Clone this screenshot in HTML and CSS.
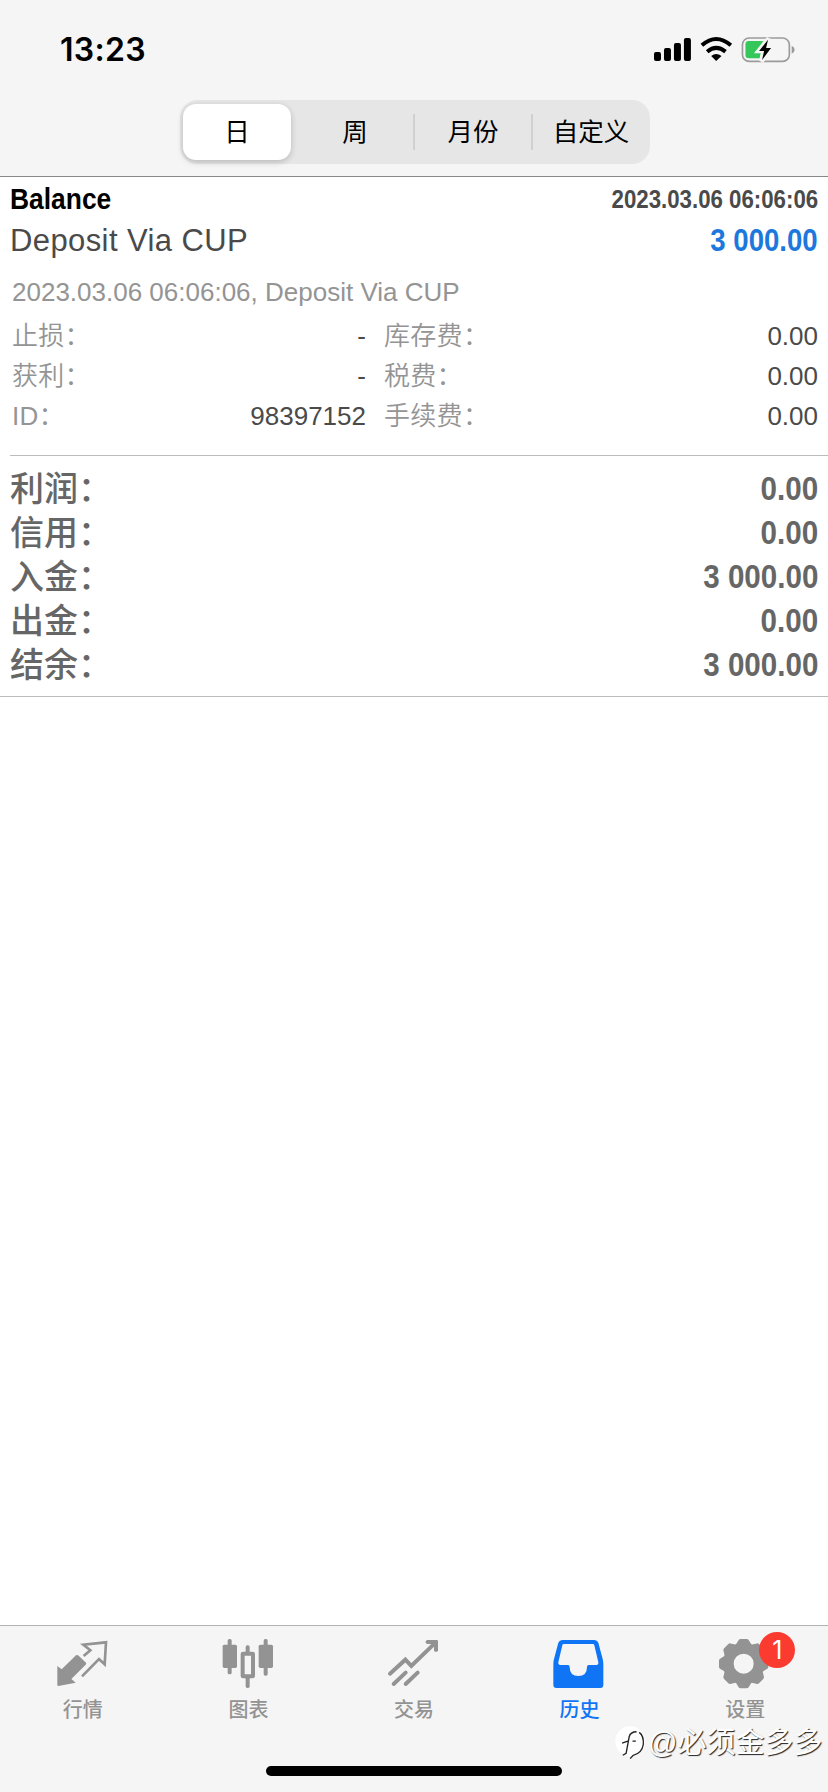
FILE: index.html
```
<!DOCTYPE html>
<html lang="zh-CN">
<head>
    <meta charset="UTF-8">
    <meta name="viewport" content="width=device-width, initial-scale=1.0">
    <title>历史</title>
    <link rel="stylesheet" href="styles.css">
</head>
<body>
    <div class="app">
        <header class="header">
            <div class="status-bar">
                <span class="time">13:23</span>
                <svg class="status-icons" viewBox="714 105 430 90">
                    <!-- signal -->
                    <rect x="717" y="156" width="21" height="27" rx="6"/>
                    <rect x="747" y="144" width="21" height="39" rx="6"/>
                    <rect x="777" y="129" width="21" height="54" rx="6"/>
                    <rect x="807" y="114" width="21" height="69" rx="6"/>
                    <!-- wifi -->
                    <g fill="none" stroke="#000" stroke-width="12">
                        <path d="M861 136 Q904 98 948 136"/>
                        <path d="M877 155 Q904 132 932 155"/>
                    </g>
                    <path d="M889 168 Q904 156 920 168 L904 183 Z"/>
                    <!-- battery -->
                    <rect x="983" y="114" width="141" height="70" rx="20" fill="none" stroke="#9b9b9b" stroke-width="5"/>
                    <path d="M1131 137 Q1140 141 1140 149 Q1140 157 1131 161 Z" fill="#9b9b9b"/>
                    <rect x="992" y="123" width="58" height="52" rx="10" fill="#35c759"/>
                    <path d="M1062 115 L1032 153 H1046 L1040 184 L1070 144 H1055 Z" stroke="#f5f5f5" stroke-width="14"/>
                    <path d="M1060 119 L1033 153 H1048 L1042 180 L1069 144 H1054 Z"/>
                </svg>
            </div>
            <div class="segments">
                <button class="segment active">日</button>
                <button class="segment">周</button>
                <button class="segment divided">月份</button>
                <button class="segment divided">自定义</button>
            </div>
        </header>

        <main class="content">
            <section class="deal">
                <div class="deal-row">
                    <span class="deal-title">Balance</span>
                    <span class="deal-date">2023.03.06 06:06:06</span>
                </div>
                <div class="deal-row amount-row">
                    <span class="deal-name">Deposit Via CUP</span>
                    <span class="deal-amount">3 000.00</span>
                </div>
                <p class="deal-comment">2023.03.06 06:06:06, Deposit Via CUP</p>
                <div class="details">
                    <div class="detail"><span>止损：</span><b>-</b></div>
                    <div class="detail"><span>库存费：</span><b>0.00</b></div>
                    <div class="detail"><span>获利：</span><b>-</b></div>
                    <div class="detail"><span>税费：</span><b>0.00</b></div>
                    <div class="detail"><span>ID：</span><b>98397152</b></div>
                    <div class="detail"><span>手续费：</span><b>0.00</b></div>
                </div>
            </section>
            <section class="totals">
                <div class="total"><span>利润：</span><b>0.00</b></div>
                <div class="total"><span>信用：</span><b>0.00</b></div>
                <div class="total"><span>入金：</span><b>3 000.00</b></div>
                <div class="total"><span>出金：</span><b>0.00</b></div>
                <div class="total"><span>结余：</span><b>3 000.00</b></div>
            </section>
        </main>

        <nav class="tab-bar">
            <a class="tab">
                <svg viewBox="158 78 180 159">
                    <path d="M171 168 L184 178 L227 136 Q231 133 235 137 L257 158 Q259 161 256 164 L213 207 L226 218 L174 228 Q171 228 171 225 Z"/>
                    <path class="line" d="M250 138 L270 121 L249 104 L317 97 L313 163 L296 147 L245 199" stroke-width="8"/>
                </svg>
                <span>行情</span>
            </a>
            <a class="tab">
                <svg viewBox="655 78 180 159">
                    <rect x="684" y="87" width="12" height="106" rx="5"/>
                    <rect x="669" y="104" width="43" height="70" rx="5"/>
                    <rect x="738" y="106" width="12" height="24" rx="5"/>
                    <rect x="738" y="200" width="12" height="34" rx="5"/>
                    <rect class="line" x="729" y="131" width="31" height="68" rx="1" stroke-width="12"/>
                    <rect x="792" y="87" width="12" height="110" rx="5"/>
                    <rect x="777" y="104" width="43" height="70" rx="5"/>
                </svg>
                <span>图表</span>
            </a>
            <a class="tab">
                <svg viewBox="252 78 180 159">
                    <g class="line" stroke-width="12" stroke-linecap="round">
                        <path d="M270 191 L316 149 L334 168 L404 100"/>
                        <path d="M281 222 L317 188 M317 222 L353 188"/>
                    </g>
                    <path d="M381 90 H410 Q414 90 414 94 V122 Q408 129 402 122 V102 H381 Q372 96 381 90 Z"/>
                </svg>
                <span>交易</span>
            </a>
            <a class="tab active">
                <svg viewBox="749 78 180 159">
                    <path fill-rule="evenodd" d="M786 90 H882 Q891 90 894 98 L907 147 Q909 154 909 162 V225 Q909 234 900 234 H768 Q759 234 759 225 V162 Q759 154 761 147 L774 98 Q777 90 786 90 Z M790 102 Q787 102 786 106 L774 157 Q773 165 780 165 H803 Q808 165 808 171 Q808 198 834 198 Q860 198 860 171 Q860 165 865 165 H888 Q895 165 894 157 L882 106 Q881 102 878 102 Z"/>
                </svg>
                <span>历史</span>
            </a>
            <a class="tab">
                <svg viewBox="376 78 180 159">
                    <g id="gear">
                        <circle cx="462" cy="161" r="46" fill="none" stroke="#939393" stroke-width="32"/>
                        <g id="teeth">
                            <path id="tooth" d="M436 108 L447 90 Q449 87 453 87 H471 Q475 87 477 90 L488 108 Z"/>
                            <use href="#tooth" transform="rotate(45 462 161)"/>
                            <use href="#tooth" transform="rotate(90 462 161)"/>
                            <use href="#tooth" transform="rotate(135 462 161)"/>
                        </g>
                        <use href="#teeth" transform="rotate(180 462 161)"/>
                    </g>
                </svg>
                <span>设置</span>
                <i class="badge">1</i>
            </a>
        </nav>

        <div class="watermark">
            <svg viewBox="74 350 92 104">
                <circle cx="119" cy="398" r="44" fill="#fff"/>
                <path d="M97 440 L107 434 L116 385 Q120 370 138 370 M95 404 L112 398 M126 398 H136 M146 372 Q160 382 158 408 Q154 434 128 440 L119 450" fill="none" stroke="#222" stroke-width="4"/>
            </svg>
            <span>@必须金多多</span>
        </div>
        <div class="home-indicator"></div>
    </div>
</body>
</html>
```
FILE: styles.css
```
* {
    box-sizing: border-box;
}

body {
    margin: 0;
    font-family: "Liberation Sans", "Noto Sans CJK SC", sans-serif;
    background-color: #fff;
}

.app {
    position: relative;
    display: flex;
    flex-direction: column;
    width: 828px;
    height: 1792px;
    overflow: hidden;
}

.header {
    height: 177px;
    background-color: #f5f5f5;
    border-bottom: 1px solid #888;
}

.status-bar {
    display: flex;
    justify-content: space-between;
    height: 100px;
    padding: 35px 32px 0 60px;
}

.time {
    font-family: Inter, sans-serif;
    font-size: 32px;
    font-weight: 600;
    letter-spacing: 0.3px;
    line-height: 30px;
}

.status-icons {
    width: 143px;
    height: 30px;
}

.segments {
    display: flex;
    width: 470px;
    height: 64px;
    margin-left: 180px;
    padding: 4px 0 4px 3px;
    border-radius: 18px;
    background-color: #e6e6e7;
}

.segment {
    position: relative;
    flex: 1;
    padding: 0 0 5px;
    border: none;
    background: none;
    color: #000;
    font-family: "Noto Sans CJK SC", sans-serif;
    font-size: 25.5px;
}

.segment.active {
    flex: none;
    width: 108px;
    margin-right: 5px;
    border-radius: 13px;
    background-color: #fff;
    box-shadow: 0 2px 6px rgba(0, 0, 0, 0.2);
}

.segment.divided::before {
    content: "";
    position: absolute;
    left: -1px;
    top: 10px;
    width: 2px;
    height: 36px;
    background-color: #d0d0d2;
}

.content {
    flex: 1;
}

.deal {
    height: 279px;
    margin-left: 10px;
    padding: 3px 10px 0 0;
    border-bottom: 1px solid #bcbcbc;
}

.deal-row {
    display: flex;
    justify-content: space-between;
    height: 38px;
    line-height: 38px;
}

.amount-row {
    height: 44px;
    line-height: 46px;
}

.deal-title {
    font-size: 30px;
    font-weight: bold;
    transform: scaleX(0.88);
    transform-origin: left;
}

.deal-date {
    color: #4a4a4a;
    font-size: 25px;
    font-weight: bold;
    transform: scaleX(0.89);
    transform-origin: right;
}

.deal-name {
    color: #4a4a4a;
    font-size: 31px;
    letter-spacing: 0.4px;
}

.deal-amount {
    color: #1d78de;
    font-size: 31px;
    font-weight: bold;
    transform: scaleX(0.89);
    transform-origin: right;
}

.deal-comment {
    margin: 12px 0 0 2px;
    color: #949494;
    font-size: 26px;
    line-height: 36px;
}

.details {
    display: grid;
    grid-template-columns: 354px 434px;
    column-gap: 18px;
    margin: 6px 0 0 2px;
}

.detail {
    display: flex;
    justify-content: space-between;
    height: 40px;
    color: #949494;
    font-size: 26px;
    line-height: 40px;
}

.detail span {
    font-weight: 350;
    letter-spacing: 0.3px;
}

.detail b {
    color: #4a4a4a;
    font-weight: normal;
}

.totals {
    height: 241px;
    padding: 10px 10px 0;
    border-bottom: 1px solid #bcbcbc;
    color: #666;
}

.total {
    display: flex;
    justify-content: space-between;
    height: 44px;
    font-size: 34px;
    line-height: 46px;
}

.total span {
    font-weight: 500;
}

.total b {
    line-height: 44px;
    transform: scaleX(0.87);
    transform-origin: right;
}

.tab-bar {
    display: flex;
    height: 167px;
    padding-top: 10px;
    border-top: 1px solid #b2b2b2;
    background-color: #f5f5f5;
}

.tab {
    position: relative;
    display: flex;
    flex: 1;
    flex-direction: column;
    align-items: center;
    color: #939393;
    font-size: 20px;
}

.tab svg {
    width: 60px;
    height: 53px;
    fill: currentColor;
}

.tab .line {
    fill: none;
    stroke: currentColor;
}

.tab span {
    margin-top: 7px;
    font-weight: 500;
    line-height: 28px;
}

.tab.active {
    color: #0f75f5;
}

.badge {
    position: absolute;
    left: 97px;
    top: -4px;
    width: 36px;
    height: 36px;
    border-radius: 50%;
    background-color: #fb3a30;
    color: #fff;
    font-family: Inter, sans-serif;
    font-size: 25px;
    font-style: normal;
    line-height: 36px;
    text-align: center;
}

.watermark {
    position: absolute;
    left: 615px;
    top: 1725px;
    display: flex;
    align-items: center;
    color: #fff;
    font-size: 29px;
    line-height: 34px;
    text-shadow: 1px 1px 1px #222;
    white-space: nowrap;
}

.watermark svg {
    width: 31px;
    height: 35px;
    margin-right: 2px;
}

.home-indicator {
    position: absolute;
    left: 266px;
    top: 1766px;
    width: 296px;
    height: 10px;
    border-radius: 5px;
    background-color: #000;
}
```
